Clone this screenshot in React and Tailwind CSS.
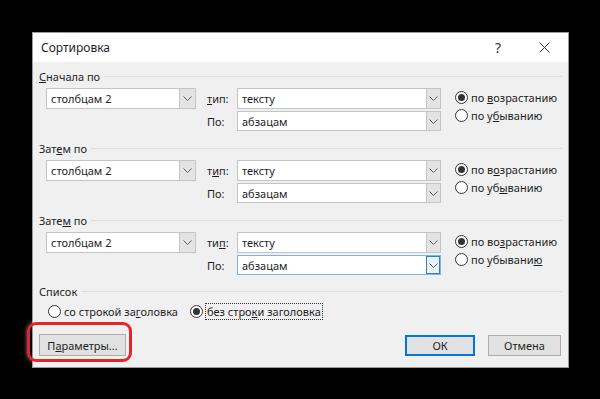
import React from 'react';

// Word "Сортировка" dialog on a black backdrop, with the red highlight
// around the "Параметры..." button.

function Chevron() {
  return (
    <svg width="9" height="5" viewBox="0 0 9 5" fill="none">
      <path d="M0.5 0.5 L4.5 4.5 L8.5 0.5" stroke="#5a5a5a" strokeWidth="1" />
    </svg>
  );
}

function Combo({ value, w, btn = 14, h = 21, focus = false }) {
  return (
    <div
      className={`flex bg-white border ${focus ? 'border-[#7eb4ea]' : 'border-[#c4c4c4]'}`}
      style={{ width: w, height: h }}
    >
      <div className="flex flex-1 items-center pl-[4px] text-[#1e1e1e]">{value}</div>
      <div
        className={`flex items-center justify-center ${
          focus ? 'bg-[#e5f1fb] border border-[#3c7fb1]' : 'bg-[#e3e3e3] border-l border-[#c4c4c4]'
        }`}
        style={{ width: btn }}
      >
        <Chevron />
      </div>
    </div>
  );
}

function Radio({ checked, children, className = '' }) {
  return (
    <div className={`flex h-[18px] items-center gap-[3px] ${className}`}>
      <div className="flex h-[13px] w-[13px] items-center justify-center rounded-full border border-[#333] bg-white">
        {checked && <div className="h-[7px] w-[7px] rounded-full bg-[#333]" />}
      </div>
      <span className="text-[#1e1e1e]">{children}</span>
    </div>
  );
}

function GroupLabel({ children }) {
  return (
    <div className="flex h-[14px] items-center">
      <span className="text-[#1e1e1e]">{children}</span>
      <div className="ml-[4px] mr-[6px] h-px flex-1 bg-[#dcdcdc]" />
    </div>
  );
}

function Section({ label, tip, asc, desc, focusLast = false }) {
  return (
    <div className="flex flex-col">
      <GroupLabel>{label}</GroupLabel>
      <div className="mt-[5px] flex">
        <div className="ml-[7px] w-[150px]">
          <Combo value="столбцам 2" w={150} btn={16} />
        </div>
        <div className="ml-[11px] flex w-[30px] flex-col">
          <div className="flex h-[21px] items-center text-[#1e1e1e]">{tip}</div>
          <div className="mt-[2px] flex h-[20px] items-center text-[#1e1e1e]">По:</div>
        </div>
        <div className="flex w-[204px] flex-col gap-[2px]">
          <Combo value="тексту" w={204} />
          <Combo value="абзацам" w={204} h={20} focus={focusLast} />
        </div>
        <div className="ml-[14px] flex flex-col">
          <Radio checked>{asc}</Radio>
          <Radio>{desc}</Radio>
        </div>
      </div>
    </div>
  );
}

export default function App() {
  return (
    <div className="relative h-[399px] w-[600px] overflow-hidden bg-black pl-[32px] pt-[32px] font-['Noto_Sans',sans-serif] text-[11px] leading-none">
      <div className="flex h-[336px] w-[537px] flex-col border border-[#9a9a9a] bg-[#f0f0f0]">
        {/* title bar */}
        <div className="flex h-[29px] items-center bg-white pl-[8px]">
          <span className="text-[12px] text-[#1e1e1e]">Сортировка</span>
          <div className="ml-auto flex items-center">
            <span className="text-[14px] text-[#333]">?</span>
            <svg className="ml-[38px] mr-[18px]" width="11" height="11" viewBox="0 0 11 11">
              <path d="M0.5 0.5 L10.5 10.5 M10.5 0.5 L0.5 10.5" stroke="#333" strokeWidth="1" />
            </svg>
          </div>
        </div>

        {/* body */}
        <div className="flex flex-1 flex-col pl-[6px] pt-[7px]">
          <Section
            label={<><u>С</u>начала по</>}
            tip={<><u>т</u>ип:</>}
            asc={<>по <u>в</u>озрастанию</>}
            desc={<>по у<u>б</u>ыванию</>}
          />
          <div className="mt-[10px]">
            <Section
              label={<>Зат<u>е</u>м по</>}
              tip={<>т<u>и</u>п:</>}
              asc={<>по в<u>о</u>зрастанию</>}
              desc={<>по уб<u>ы</u>ванию</>}
            />
          </div>
          <div className="mt-[10px]">
            <Section
              label={<>Зате<u>м</u> по</>}
              tip={<>ти<u>п</u>:</>}
              asc={<>по во<u>з</u>растанию</>}
              desc={<>по убывани<u>ю</u></>}
              focusLast
            />
          </div>

          <div className="mt-[9px]">
            <GroupLabel>Список</GroupLabel>
            <div className="mt-[4px] flex items-center">
              <Radio className="ml-[9px]">со строкой за<u>г</u>оловка</Radio>
              <div className="ml-[12px] flex h-[18px] items-center gap-[2px]">
                <div className="flex h-[13px] w-[13px] items-center justify-center rounded-full border border-[#333] bg-white">
                  <div className="h-[7px] w-[7px] rounded-full bg-[#333]" />
                </div>
                <span className="flex h-[17px] items-center border border-dotted border-[#333] px-[1px] text-[#1e1e1e]">
                  без стро<u>к</u>и заголовка
                </span>
              </div>
            </div>
          </div>

          <div className="mt-[14px] flex items-center">
            <button className="flex h-[22px] w-[87px] items-center justify-center border border-[#adadad] bg-[#e1e1e1] text-[#1e1e1e]">
              П<u>а</u>раметры...
            </button>
            <button className="ml-auto flex h-[21px] w-[70px] items-center justify-center border-2 border-[#0078d7] bg-[#e1e1e1] text-[#1e1e1e]">
              ОК
            </button>
            <button className="ml-[13px] mr-[7px] flex h-[21px] w-[73px] items-center justify-center border border-[#adadad] bg-[#e1e1e1] text-[#1e1e1e]">
              Отмена
            </button>
          </div>
        </div>
      </div>

      {/* red highlight annotation */}
      <div className="absolute left-[27px] top-[322px] h-[40px] w-[105px] rounded-[9px] border-[3px] border-[#e3262b] shadow-[0_0_4px_rgba(255,255,255,0.5)]" />
    </div>
  );
}
